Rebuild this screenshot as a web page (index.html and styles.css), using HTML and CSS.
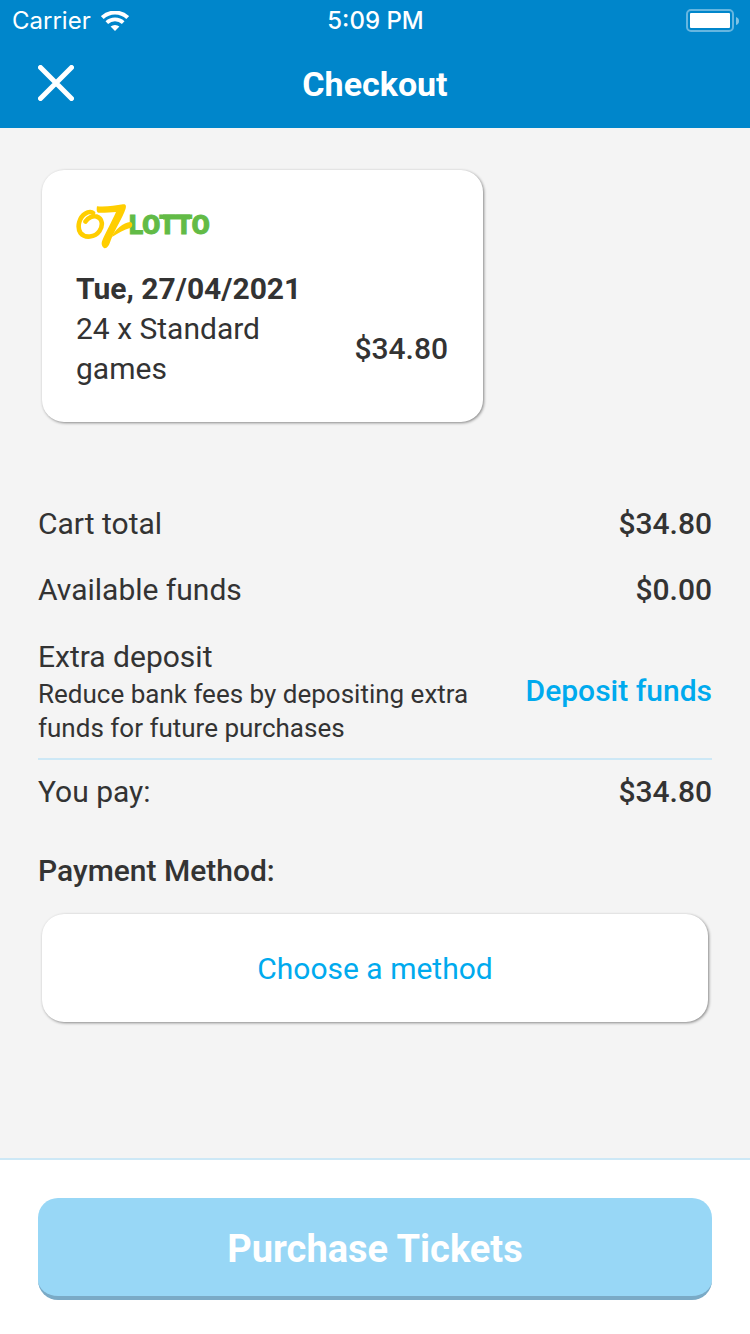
FILE: index.html
```html
<!DOCTYPE html>
<html lang="en">
<head>
    <meta charset="UTF-8">
    <meta name="viewport" content="width=device-width, initial-scale=1.0">
    <title>Checkout</title>
    <link rel="stylesheet" href="styles.css">
</head>
<body>
    <header>
        <div class="status-bar">
            <div class="carrier">
                <span>Carrier</span>
                <svg width="28" height="20" viewBox="0 0 28 20" fill="none" stroke="#fff">
                    <path d="M1.3 6.6 A18.500 18.500 0 0 1 26.7 6.6" stroke-width="4"/>
                    <path d="M5.800 11.600 A12 12 0 0 1 22.200 11.600" stroke-width="3.8"/>
                    <path d="M14 20 L9.600 15.600 A6.500 6.500 0 0 1 18.400 15.600 Z" fill="#fff" stroke="none"/>
                </svg>
            </div>
            <span class="time">5:09 PM</span>
            <svg class="battery" width="53" height="24" viewBox="0 0 53 24">
                <rect x="1" y="1" width="46" height="21" rx="4" fill="none" stroke="#66b6e0" stroke-width="2"/>
                <rect x="4" y="4" width="40" height="15" rx="1" fill="#fff"/>
                <path d="M50 8 Q53 9 53 12 Q53 15 50 16 Z" fill="#80c3e5"/>
            </svg>
        </div>
        <div class="nav-bar">
            <button type="button" class="close" aria-label="Close">
                <svg width="36" height="36" viewBox="0 0 36 36" stroke="#fff" stroke-width="5" stroke-linecap="round">
                    <path d="M2.5 2.5 L33.5 33.5 M33.5 2.5 L2.5 33.5"/>
                </svg>
            </button>
            <h1>Checkout</h1>
        </div>
    </header>

    <main>
        <section class="card ticket">
            <svg class="logo" width="140" height="46" viewBox="0 0 140 46" role="img" aria-label="OZ Lotto">
                <text class="logo-text" x="53" y="30">LOTTO</text>
                <path d="M87 13 H114" stroke="#62bb46" stroke-width="5"/>
                <path d="M9.500 17.500 C12 13.500 17 11.500 20.500 12.500 C27 14.500 27 22 23.500 27 C19 33.500 9 34.500 4.500 29 C.5 22.500 3.500 13 9.500 9.500 C12.500 7.500 16 7.800 17 9" fill="none" stroke="#ffce00" stroke-width="4.600" stroke-linecap="round"/>
                <g fill="#ffce00">
                    <path d="M21 2.200 C30 3 39 1.500 47 .3 C50 0 50.500 2 49.500 5 C47 13 38 27 34.500 37 C33 42 30.500 45 28 44 C25.500 42.500 25 39 26.500 36 C30 28 36 17 40 8 C35 8.300 28 9 22.500 8.800 C20.500 8.500 20.500 5 21 2.200 Z"/>
                    <path d="M36 33 C38 26 48 18.500 54 18 C57 18 57 23 54 24 C48 25.500 43 28.500 36 33 Z"/>
                </g>
            </svg>
            <h2>Tue, 27/04/2021</h2>
            <div class="ticket-row">
                <p>24 x Standard games</p>
                <strong>$34.80</strong>
            </div>
        </section>

        <dl class="totals">
            <div class="line">
                <dt>Cart total</dt>
                <dd>$34.80</dd>
            </div>
            <div class="line">
                <dt>Available funds</dt>
                <dd>$0.00</dd>
            </div>
            <div class="line deposit">
                <dt>Extra deposit
                    <small>Reduce bank fees by depositing extra funds for future purchases</small>
                </dt>
                <dd><a href="#deposit">Deposit funds</a></dd>
            </div>
            <div class="line pay">
                <dt>You pay:</dt>
                <dd>$34.80</dd>
            </div>
        </dl>

        <h3>Payment Method:</h3>
        <button type="button" class="card method">Choose a method</button>
    </main>

    <footer>
        <button type="button" class="purchase">Purchase Tickets</button>
    </footer>
</body>
</html>
```
FILE: styles.css
```css
* {
    box-sizing: border-box;
    margin: 0;
    padding: 0;
}

body {
    display: flex;
    flex-direction: column;
    min-height: 100vh;
    background-color: #f4f4f4;
    color: #333;
    font-family: Roboto, "Liberation Sans", sans-serif;
    font-size: 30px;
    line-height: 40px;
}

button {
    border: none;
    font-family: inherit;
    cursor: pointer;
}

svg {
    display: block;
}

header {
    background-color: #0086cb;
    color: #fff;
}

.status-bar {
    display: grid;
    grid-template-columns: 1fr auto 1fr;
    align-items: center;
    height: 42px;
    padding: 0 11px 0 12px;
    font-family: Inter, "Liberation Sans", sans-serif;
    font-size: 24px;
}

.carrier {
    display: flex;
    align-items: center;
    gap: 10px;
}

.time {
    font-weight: 500;
}

.battery {
    justify-self: end;
}

.nav-bar {
    display: grid;
    grid-template-columns: 1fr auto 1fr;
    align-items: center;
    height: 86px;
    padding: 0 38px 4px;
}

.close {
    justify-self: start;
    background: none;
}

h1 {
    padding-top: 2px;
    font-size: 34px;
    font-weight: 700;
}

main {
    flex: 1;
    padding: 42px 38px;
}

.card {
    margin: 0 4px;
    border-radius: 22px;
    background-color: #fff;
    box-shadow: 1px 1px 3px rgba(0, 0, 0, 0.45);
}

.ticket {
    max-width: 441px;
    padding: 34px 35px 33px 34px;
}

.logo-text {
    fill: #62bb46;
    stroke: #62bb46;
    stroke-width: 1px;
    font-size: 26px;
    font-weight: 900;
}

h2 {
    margin-top: 19px;
    font-size: 30px;
    font-weight: 700;
}

.ticket-row {
    display: flex;
    align-items: center;
    justify-content: space-between;
    gap: 60px;
}

.ticket-row strong,
dd {
    font-weight: 500;
}

.totals {
    margin-top: 82px;
}

.line {
    display: flex;
    align-items: center;
    justify-content: space-between;
    gap: 40px;
    margin-bottom: 26px;
}

.line dd {
    flex-shrink: 0;
}

.deposit {
    margin: 27px 0 0;
    padding-bottom: 13px;
    border-bottom: 2px solid #cde8f6;
}

small {
    display: block;
    font-size: 26px;
    line-height: 34px;
}

a {
    color: #00aaee;
    text-decoration: none;
}

.pay {
    margin: 12px 0 39px;
}

h3 {
    margin-bottom: 23px;
    font-size: 30px;
    font-weight: 500;
}

.method {
    width: calc(100% - 8px);
    padding: 35px 34px 33px;
    color: #00aaee;
    font-size: 30px;
    line-height: 40px;
}

footer {
    padding: 38px 38px 34px;
    border-top: 2px solid #cde8f6;
    background-color: #fff;
}

.purchase {
    width: 100%;
    padding: 28px 26px 24px;
    border-bottom: 4px solid #7aaac6;
    border-radius: 20px;
    background-color: #98d7f6;
    color: #fff;
    font-size: 38px;
    font-weight: 700;
    line-height: 46px;
}
```
